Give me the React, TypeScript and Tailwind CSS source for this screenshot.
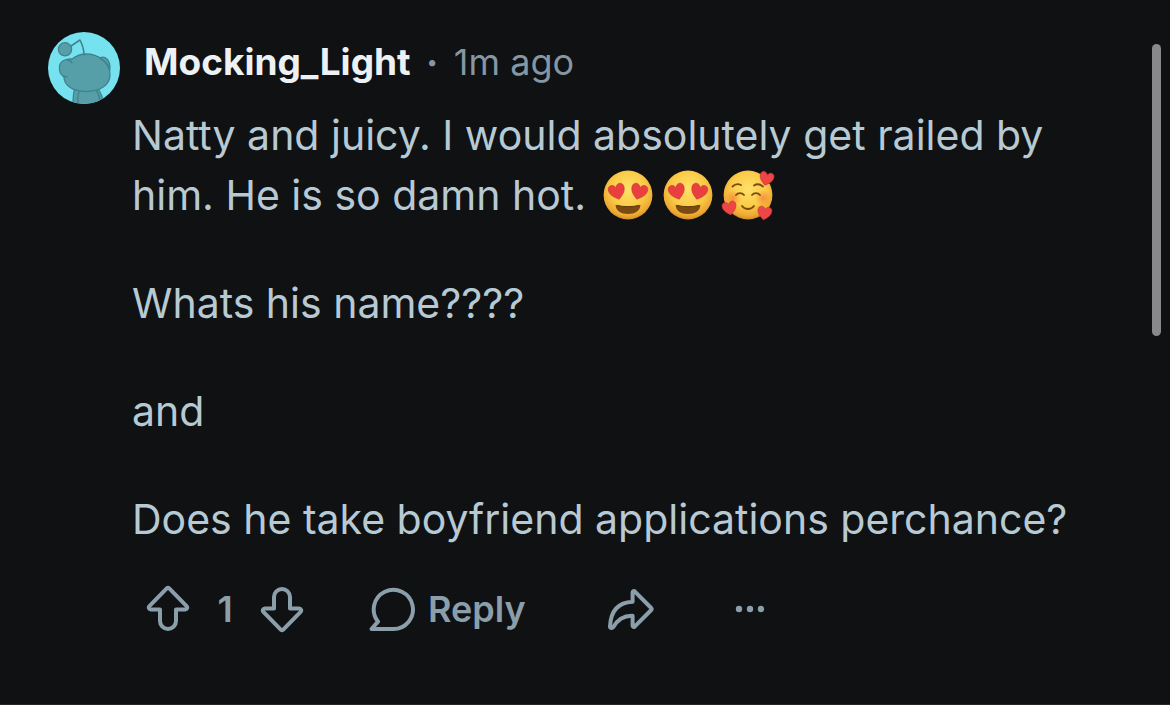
import React from 'react'

const Avatar = () => (
    <svg viewBox="0 0 72 72" className="size-18 shrink-0 rounded-full" role="img" aria-label="Avatar">
        <rect width="72" height="72" fill="#76e2ef" />
        <g fill="#569fa8" stroke="#3f838e" strokeWidth="1.3" strokeLinejoin="round" strokeLinecap="round">
            <path d="M27 56C25 61 25 66 25 73H56C55 66 53 61 50 56Z" />
            <path d="M48 58C51 62 52 67 52 72M31 60C29 64 30 68 30 72" fill="none" />
            <path d="M52 26C57 23 62 28 62 36L58 38Z" />
            <path d="M24 27C19 26 12 29 11.5 34C11 39 13 43 16 45C16 54 26 59.5 38 59.5C52 59.5 62 53 62 43C62 30 50 22 38 22C33 22 28 24 24 27Z" />
            <path d="M24 31C23 29 21 28 19 28M16 45C14 43 15 44 19 45M53 27C58 30 61 34 62 38" fill="none" />
            <path d="M36 23C36 17 34 12 32 8L23 14" fill="none" strokeWidth="1.6" />
            <circle cx="17" cy="17.3" r="6.6" />
        </g>
    </svg>
)

const FaceGradient = ({ id }: { id: string }) => (
    <radialGradient id={id} cx="0.5" cy="0.38" r="0.64">
        <stop offset="0" stopColor="#ffe169" />
        <stop offset="0.55" stopColor="#fbcb48" />
        <stop offset="0.85" stopColor="#eda932" />
        <stop offset="1" stopColor="#cf8526" />
    </radialGradient>
)

const heart = 'M0 8C-4 5-8 2-8-3C-8-8-2-9 0-4C2-9 8-8 8-3C8 2 4 5 0 8Z'

const HeartEyes = ({ id }: { id: string }) => (
    <svg viewBox="0 0 60 60" className="size-15" role="img" aria-label="😍">
        <defs>
            <FaceGradient id={id} />
        </defs>
        <circle cx="30" cy="30" r="24.4" fill={`url(#${id})`} />
        <g fill="#e9403f" stroke="#c93434" strokeWidth="0.6">
            <path d={heart} transform="translate(19 26.5) rotate(-16)" />
            <path d={heart} transform="translate(41 26.5) rotate(16)" />
        </g>
        <path d="M17.5 40C25 42 35 42 42.5 40C42 46 37 49 30 49C23 49 18 46 17.5 40Z" fill="#7b4a12" />
        <path d="M18.5 40.3C26 42.2 34 42.2 41.5 40.3" fill="none" stroke="#5f3609" />
    </svg>
)

const SmilingHearts = () => (
    <svg viewBox="0 0 60 60" className="size-15" role="img" aria-label="🥰">
        <defs>
            <FaceGradient id="face-hearts" />
            <radialGradient id="blush">
                <stop offset="0" stopColor="#f5743a" stopOpacity="0.65" />
                <stop offset="1" stopColor="#f5743a" stopOpacity="0" />
            </radialGradient>
        </defs>
        <circle cx="30" cy="30" r="24.4" fill="url(#face-hearts)" />
        <circle cx="15" cy="33" r="8" fill="url(#blush)" />
        <circle cx="45" cy="33" r="8" fill="url(#blush)" />
        <g fill="none" stroke="#7a4c10" strokeWidth="1.8" strokeLinecap="round">
            <path d="M14.5 21.5C17 19 20 18.5 23 20" />
            <path d="M36 20.5C39 18.5 42 19 45 21.5" />
            <path d="M18 30C20 27.5 24 27.5 26 30" />
            <path d="M34 30C36 27.5 40 27.5 42 30" />
            <path d="M24 41C27 45 33 45 36 41" />
        </g>
        <g fill="#ee4545" stroke="#cc3838" strokeWidth="0.8">
            <path d={heart} transform="translate(48.5 13.5) rotate(14) scale(0.86)" />
            <path d={heart} transform="translate(11.5 43) rotate(-12) scale(0.86)" />
            <path d={heart} transform="translate(46.5 48) rotate(10) scale(0.86)" />
        </g>
    </svg>
)

const Icon = ({ children }: { children: React.ReactNode }) => (
    <svg
        viewBox="0 0 48 48"
        className="size-12"
        fill="none"
        stroke="currentColor"
        strokeWidth="4"
        strokeLinejoin="round"
        strokeLinecap="round"
        aria-hidden="true"
    >
        {children}
    </svg>
)

const arrow =
    'M23 3.2a1.5 1.5 0 0 1 2 0L42.6 21.2a2 2 0 0 1-1.4 3.4H32V36a8 8 0 0 1-16 0V24.6H6.8a2 2 0 0 1-1.4-3.4Z'

const ActionBar = () => (
    <div className="flex items-center pl-36 pt-9 text-4xl/12 font-semibold text-[#8b9fab]">
        <button type="button" aria-label="Upvote">
            <Icon>
                <path d={arrow} />
            </Icon>
        </button>
        <span className="w-[66px] text-center">1</span>
        <button type="button" aria-label="Downvote">
            <Icon>
                <path d={arrow} transform="matrix(1 0 0 -1 0 48)" />
            </Icon>
        </button>
        <button type="button" className="ml-[62px] flex items-center gap-3">
            <Icon>
                <path d="M25.3 44H3.5L10 36.6A19.6 19.6 0 1 1 25.3 44Z" />
            </Icon>
            Reply
        </button>
        <button type="button" className="ml-20" aria-label="Share">
            <Icon>
                <path d="M26.6 7.5a1.3 1.3 0 0 1 2.3-.9L45.2 23a1.5 1.5 0 0 1 0 2L28.9 41.4a1.3 1.3 0 0 1-2.3-.9V30.8C18 30.5 12 34 7.2 42.2C6.2 43.6 4 43.2 4 41.6C4.6 27 11 17.6 26.6 16.8Z" />
            </Icon>
        </button>
        <button type="button" className="ml-18" aria-label="More options">
            <svg viewBox="0 0 48 48" className="size-12" fill="currentColor" aria-hidden="true">
                <circle cx="13" cy="24" r="3.2" />
                <circle cx="24" cy="24" r="3.2" />
                <circle cx="35" cy="24" r="3.2" />
            </svg>
        </button>
    </div>
)

export default function App() {
    return (
        <main className="relative min-h-screen border-b border-[#2a2729] bg-[#0f1113] font-['Inter',sans-serif]">
            <article className="pt-8">
                <header className="flex pl-12">
                    <Avatar />
                    <div className="flex gap-4 pl-6 text-4xl/15 text-[#8497a3]">
                        <a href="#" className="text-[37px]/15 font-bold text-[#eef1f3]">
                            Mocking_Light
                        </a>
                        <span className="text-xl/15">•</span>
                        <time>1m ago</time>
                    </div>
                </header>
                <div className="flex flex-col gap-12 pl-33 pr-20 pt-px text-[41px]/15 text-[#b7cad4]">
                    <p>
                        Natty and juicy. I would absolutely get railed by him. He is so damn hot.{' '}
                        <span className="inline-flex align-top">
                            <HeartEyes id="face-one" />
                            <HeartEyes id="face-two" />
                            <SmilingHearts />
                        </span>
                    </p>
                    <p>Whats his name????</p>
                    <p>and</p>
                    <p>Does he take boyfriend applications perchance?</p>
                </div>
                <ActionBar />
            </article>
            <div className="absolute right-[9px] top-11 h-73 w-[9px] rounded-full bg-[#88898a]" />
        </main>
    )
}
